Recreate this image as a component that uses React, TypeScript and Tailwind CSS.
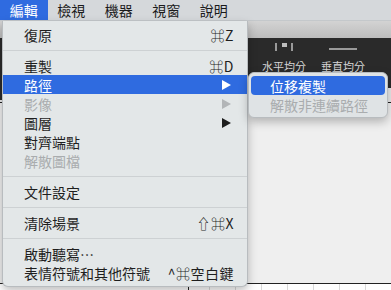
import type { ReactNode } from "react";

const CJK = { fontFamily: '"Noto Sans CJK TC", "DejaVu Sans", sans-serif' };

type Item =
  | { kind: "sep" }
  | {
      kind: "item";
      label: string;
      shortcut?: string;
      arrow?: boolean;
      disabled?: boolean;
      active?: boolean;
    };

const editMenu: Item[] = [
  { kind: "item", label: "復原", shortcut: "⌘Z" },
  { kind: "sep" },
  { kind: "item", label: "重製", shortcut: "⌘D" },
  { kind: "item", label: "路徑", arrow: true, active: true },
  { kind: "item", label: "影像", arrow: true, disabled: true },
  { kind: "item", label: "圖層", arrow: true },
  { kind: "item", label: "對齊端點" },
  { kind: "item", label: "解散圖檔", disabled: true },
  { kind: "sep" },
  { kind: "item", label: "文件設定" },
  { kind: "sep" },
  { kind: "item", label: "清除場景", shortcut: "⇧⌘X" },
  { kind: "sep" },
  { kind: "item", label: "啟動聽寫⋯" },
  { kind: "item", label: "表情符號和其他符號", shortcut: "^⌘空白鍵" },
];

function Arrow({ color }: { color: string }) {
  return (
    <svg width="9" height="10" viewBox="0 0 9 10" className="mr-[3px]">
      <path d="M0 0 L9 5 L0 10 Z" fill={color} />
    </svg>
  );
}

function MenuRow({ item }: { item: Item }) {
  if (item.kind === "sep") {
    return (
      <div className="flex h-[12px] items-center">
        <div className="h-px w-full bg-[#cdd1d3]" />
      </div>
    );
  }
  const text = item.active
    ? "text-white"
    : item.disabled
      ? "text-[#a9acae]"
      : "text-[#1e1e1e]";
  return (
    <div
      className={`flex h-[19px] items-center justify-between pl-[21px] pr-[13px] text-[14px] leading-none ${text} ${
        item.active ? "bg-[#2f6be0]" : ""
      }`}
    >
      <span>{item.label}</span>
      {item.shortcut && <span className="tracking-[0.5px]">{item.shortcut}</span>}
      {item.arrow && (
        <Arrow color={item.active ? "#ffffff" : item.disabled ? "#b2b5b7" : "#1e1e1e"} />
      )}
    </div>
  );
}

function MenuBar() {
  const titles = ["編輯", "檢視", "機器", "視窗", "說明"];
  return (
    <div className="flex h-[21px] items-stretch border-b border-[#c4c8cb] bg-[#d5d8db]">
      {titles.map((t, i) => (
        <div
          key={t}
          className={`flex items-center px-[9.75px] text-[14px] leading-none ${
            i === 0 ? "bg-[#2f6be0] text-white" : "text-[#1a1a1a]"
          }`}
        >
          {t}
        </div>
      ))}
    </div>
  );
}

function ToolButton({ icon, label }: { icon: ReactNode; label: string }) {
  return (
    <div className="flex flex-col items-center">
      <div className="flex h-[12px] items-end">{icon}</div>
      <div className="mt-[10px] text-[11px] leading-none text-[#d6d6d6]">{label}</div>
    </div>
  );
}

function Background() {
  return (
    <div className="flex flex-col">
      <div className="h-[17px] bg-gradient-to-b from-[#d3d3d3] to-[#bdbdbd]" />
      <div className="flex h-[50px] gap-[15px] bg-[#2a2a2a] pl-[262px] pt-[1px]">
        <ToolButton
          label="水平均分"
          icon={
            <svg width="22" height="8" viewBox="0 0 22 8">
              <rect x="2" y="0" width="2" height="8" fill="#9a9a9a" />
              <rect x="9" y="0" width="5" height="4" fill="#bdbdbd" />
              <rect x="18" y="0" width="2" height="8" fill="#9a9a9a" />
            </svg>
          }
        />
        <ToolButton
          label="垂直均分"
          icon={
            <svg width="28" height="3" viewBox="0 0 28 3">
              <rect x="0" y="0" width="28" height="2" fill="#9a9a9a" />
            </svg>
          }
        />
      </div>
      <div className="h-[14px] bg-[#e9e9e9]" />
      <div className="h-px bg-[#222]" />
      <div className="h-[180px] bg-[#efefef]" />
      <div className="h-px bg-[#222]" />
      <div className="flex h-[10px] bg-white pl-[188px]">
        <div className="w-[27px] border-l border-[#222]" />
        {[0, 1, 2, 3, 4, 5, 6].map((i) => (
          <div key={i} className="w-[26px] shrink-0 border-l border-[#d9d9d9]" />
        ))}
      </div>
    </div>
  );
}

export default function App() {
  return (
    <div className="relative h-[290px] w-[391px] overflow-hidden bg-white" style={CJK}>
      <MenuBar />
      <Background />
      <div className="absolute left-0 top-[40px] h-[60px] w-[2px] bg-[#2a2a2a]" />

      <div className="absolute left-[2px] top-[21px] w-[246px] rounded-b-[6px] border-x border-b border-[#b8bcbf] bg-[#e3e7e8] pb-[4px] pt-[4px] shadow-[0_4px_10px_rgba(0,0,0,0.25)]">
        {editMenu.map((it, i) => (
          <MenuRow key={i} item={it} />
        ))}
      </div>

      <div className="absolute left-[248px] top-[72px] w-[140px] rounded-[6px] border border-[#b8bcbf] bg-[#dfe3e5] py-[3px] shadow-[0_4px_10px_rgba(0,0,0,0.25)]">
        <div className="mx-[2px] flex h-[19px] items-center rounded-[4px] bg-[#2f6be0] pl-[19px] text-[14px] leading-none text-white">
          位移複製
        </div>
        <div className="flex h-[19px] items-center pl-[21px] text-[14px] leading-none text-[#a9acae]">
          解散非連續路徑
        </div>
      </div>
    </div>
  );
}
